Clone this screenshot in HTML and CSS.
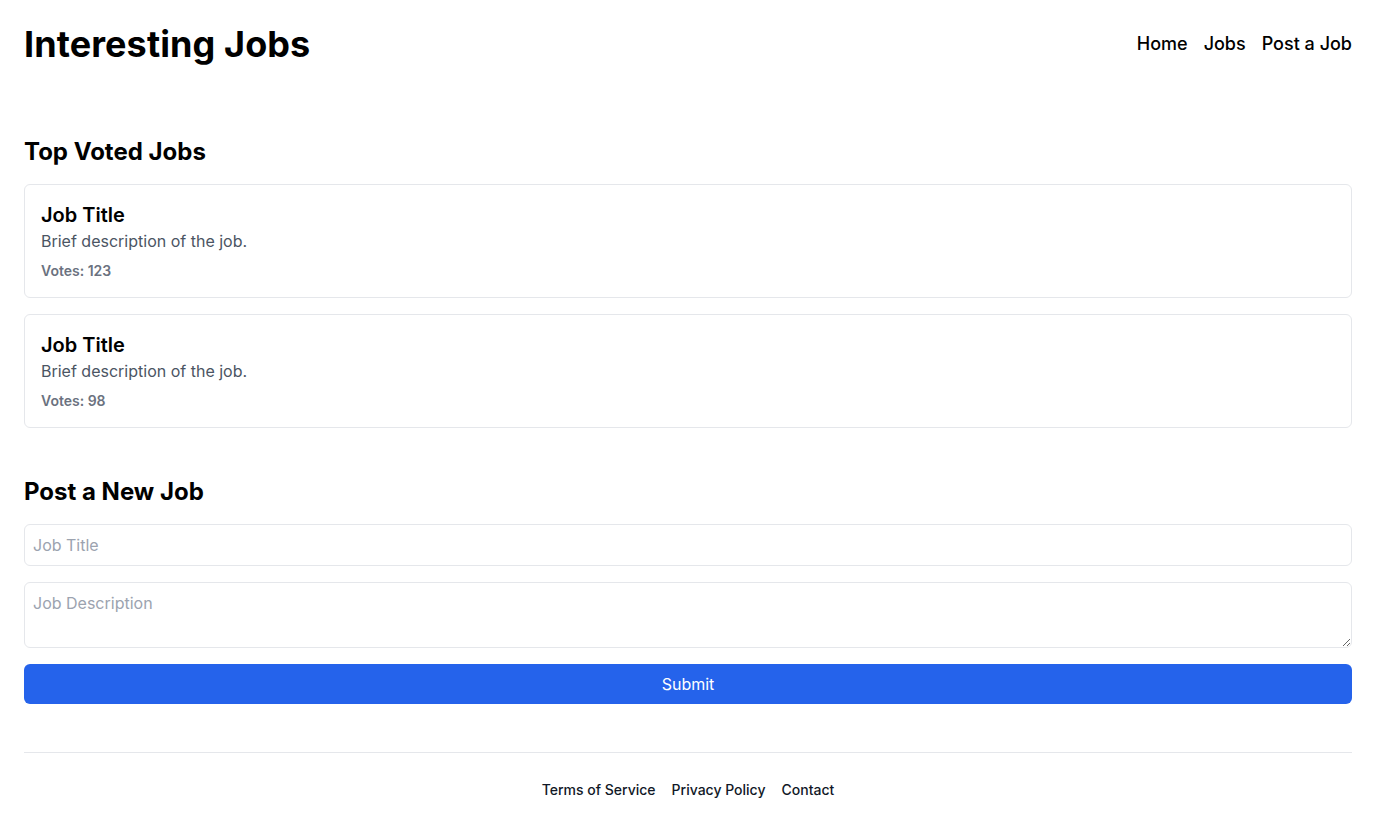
FILE: index.html
```html
<!DOCTYPE html>
<html lang="en">
<head>
<meta charset="utf-8">
<title>Interesting Jobs</title>
<link rel="stylesheet" href="styles.css">
</head>
<body>
<div class="page">
  <header class="site-header">
    <h1 class="brand">Interesting Jobs</h1>
    <nav class="nav">
      <a href="#">Home</a>
      <a href="#">Jobs</a>
      <a href="#">Post a Job</a>
    </nav>
  </header>
  <main class="main">
    <section class="section">
      <h2 class="section-title">Top Voted Jobs</h2>
      <div class="job-list">
        <article class="job-card">
          <h3 class="job-title">Job Title</h3>
          <p class="job-desc">Brief description of the job.</p>
          <p class="job-votes">Votes: 123</p>
        </article>
        <article class="job-card">
          <h3 class="job-title">Job Title</h3>
          <p class="job-desc">Brief description of the job.</p>
          <p class="job-votes">Votes: 98</p>
        </article>
      </div>
    </section>
    <section class="section">
      <h2 class="section-title">Post a New Job</h2>
      <form class="job-form">
        <input class="field" type="text" placeholder="Job Title">
        <textarea class="field area" rows="2" placeholder="Job Description"></textarea>
        <button class="submit" type="button">Submit</button>
      </form>
    </section>
  </main>
  <footer class="site-footer">
    <a href="#">Terms of Service</a>
    <a href="#">Privacy Policy</a>
    <a href="#">Contact</a>
  </footer>
</div>
</body>
</html>
```

FILE: styles.css
```css
* { box-sizing: border-box; }
html, body { margin: 0; padding: 0; background: #fff; }
body {
  font-family: Inter, "Noto Sans", sans-serif;
  color: #000;
}
.page { padding: 24px 24px 0; }
.site-header {
  display: flex;
  justify-content: space-between;
  align-items: center;
}
.brand {
  margin: 0;
  font-size: 36px;
  line-height: 40px;
  font-weight: 700;
  letter-spacing: 0.1px;
}
.nav { display: flex; gap: 16px; }
.nav a {
  color: #000;
  text-decoration: none;
  font-size: 18px;
  line-height: 28px;
  font-weight: 500;
}
.main {
  margin-top: 72px;
  display: flex;
  flex-direction: column;
  gap: 48px;
}
.section-title {
  margin: 0 0 16px;
  font-size: 24px;
  line-height: 32px;
  font-weight: 700;
}
.job-list { display: flex; flex-direction: column; gap: 16px; }
.job-card {
  border: 1px solid #e5e7eb;
  border-radius: 6px;
  padding: 16px;
}
.job-title {
  margin: 0;
  font-size: 20px;
  line-height: 28px;
  font-weight: 600;
}
.job-desc {
  margin: 0;
  font-size: 16px;
  line-height: 24px;
  color: #4b5563;
}
.job-votes {
  margin: 8px 0 0;
  font-size: 14px;
  line-height: 20px;
  font-weight: 600;
  color: #6b7280;
}
.job-form { display: flex; flex-direction: column; gap: 16px; }
.field {
  display: block;
  width: 100%;
  margin: 0;
  font-family: inherit;
  font-size: 16px;
  line-height: 24px;
  padding: 8px;
  border: 1px solid #e5e7eb;
  border-radius: 6px;
  color: #000;
  background: #fff;
  outline: none;
}
.area { height: 66px; resize: vertical; }
.field::placeholder { color: #9ca3af; }
.submit {
  display: block;
  width: 100%;
  margin: 0;
  padding: 8px 16px;
  border: 0;
  border-radius: 6px;
  background: #2563eb;
  color: #fff;
  font-family: inherit;
  font-size: 16px;
  line-height: 24px;
}
.site-footer {
  margin-top: 48px;
  border-top: 1px solid #e5e7eb;
  padding: 27px 0 25px;
  display: flex;
  justify-content: center;
  gap: 16px;
}
.site-footer a {
  color: #111827;
  text-decoration: none;
  font-size: 14px;
  line-height: 20px;
  font-weight: 500;
}
```
